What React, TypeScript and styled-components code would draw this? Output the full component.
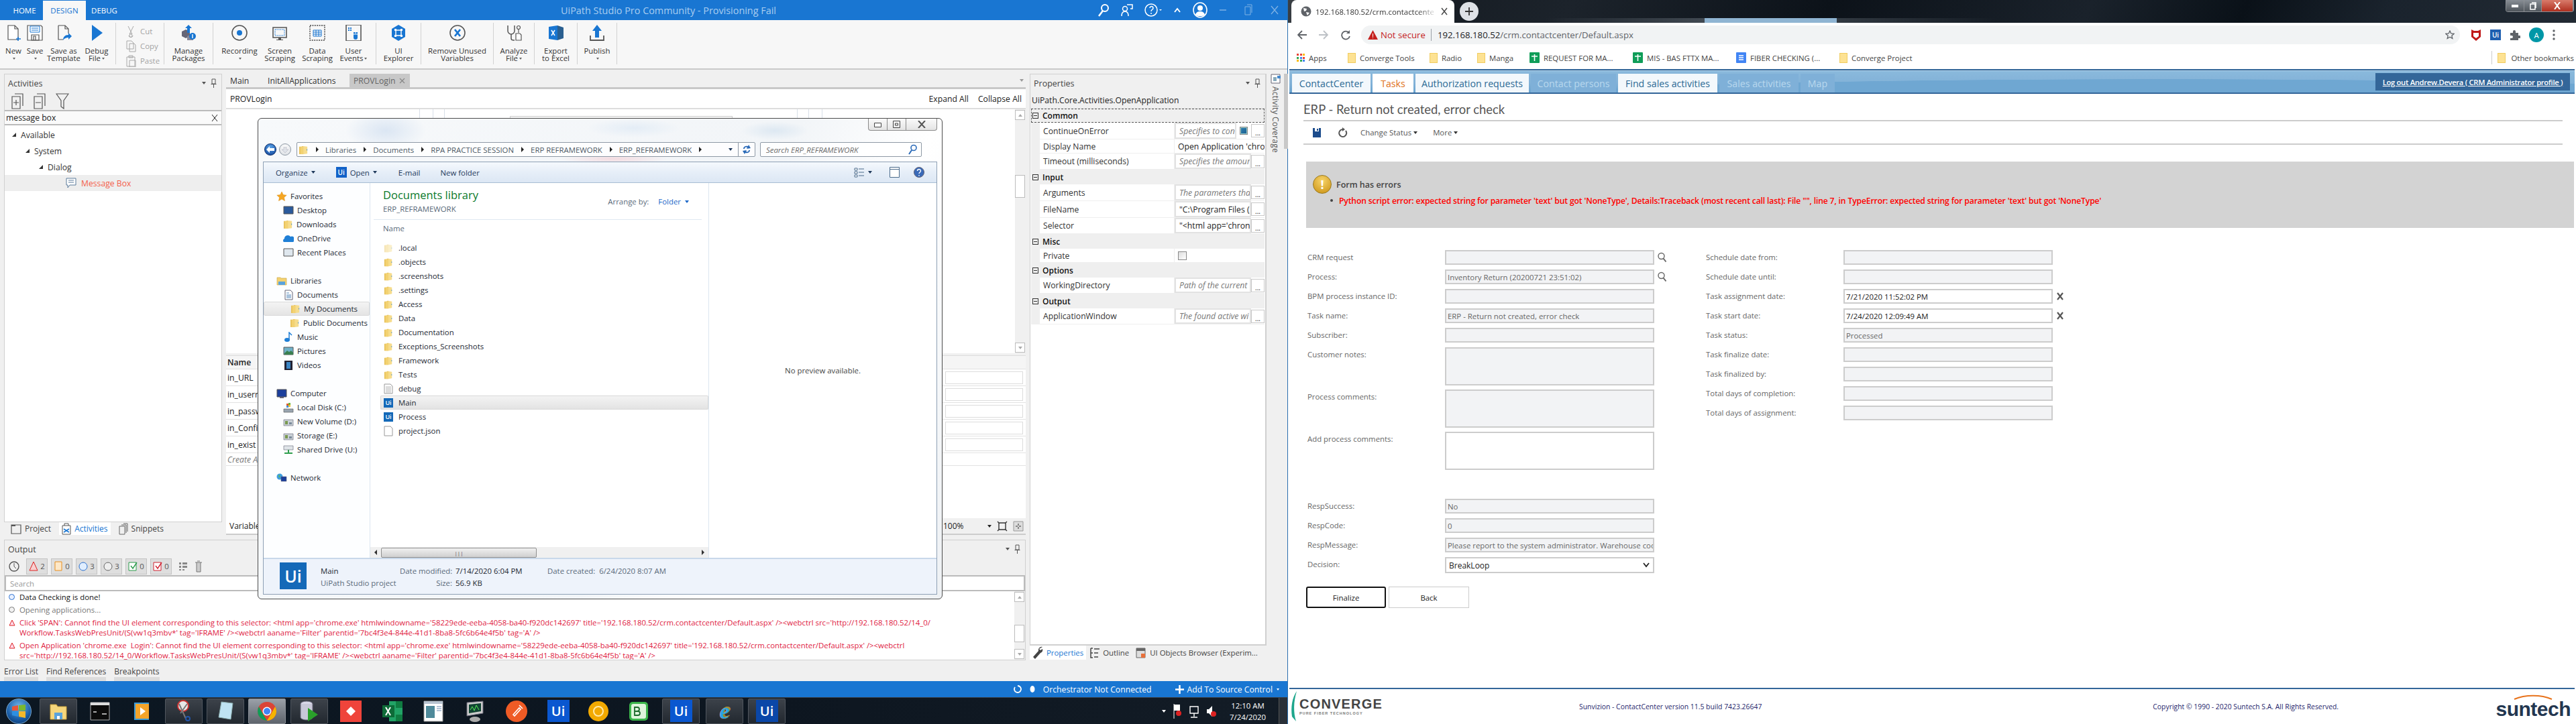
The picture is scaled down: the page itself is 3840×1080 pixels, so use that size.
import React from "react";
import styled, { createGlobalStyle } from "styled-components";

const FONT = `"Open Sans", "Noto Sans", "Liberation Sans", sans-serif`;
const BLUE = "#1976d2";

const GlobalStyle = createGlobalStyle`
  html, body { margin: 0; padding: 0; background: #fff; }
  body { width: 3840px; height: 1080px; overflow: hidden; font-family: ${FONT}; font-size: 11.4px; color: #222; }
  * { box-sizing: border-box; }
`;

const Screen = styled.div`
  display: flex;
  width: 3840px;
  height: 1080px;
  overflow: hidden;
`;

/* ---------- shared bits ---------- */

const Line = styled.div`
  white-space: pre;
`;

const Svg = styled.svg`
  display: block;
  flex: none;
`;

const Folder = ({ s = 15 }: { s?: number }) => (
  <Svg width={s} height={s} viewBox="0 0 16 16">
    <path d="M1 3h4l1-1h2v13H1z" fill="#e8c25c" />
    <path d="M8 2l6 1v11l-6 1z" fill="#f6dc8c" />
    <path d="M3 3h5v12H3z" fill="#f3d272" />
    <path d="M13 7h1v2h-1z" fill="#4a90c0" />
  </Svg>
);

const PaleFolder = styled.span`
  display: block;
  opacity: 0.45;
`;

const UiSquare = styled.span<{ $s: number; $bg?: string }>`
  display: flex;
  flex: none;
  align-items: center;
  justify-content: center;
  width: ${(p) => p.$s}px;
  height: ${(p) => p.$s}px;
  background: ${(p) => p.$bg ?? "#1469b8"};
  color: #fff;
  font-weight: 600;
  font-size: ${(p) => Math.round(p.$s * 0.62)}px;
  line-height: 1;
`;

const Dotted = styled.div`
  flex: 1;
  height: 5px;
  margin: 0 8px;
  background-image: radial-gradient(#a8a8a8 0.6px, transparent 0.7px);
  background-size: 2px 2px;
`;

const Chevron = styled.span<{ $c?: string }>`
  display: inline-block;
  width: 0;
  height: 0;
  border-left: 3px solid transparent;
  border-right: 3px solid transparent;
  border-top: 4px solid ${(p) => p.$c ?? "#555"};
`;

const Pin = () => (
  <Svg width="9" height="14" viewBox="0 0 9 14">
    <path d="M2 1h5v7H2zM0.5 8.5h8M4.500 9v5" fill="none" stroke="#555" />
  </Svg>
);

/* ---------- studio title bar ---------- */

const Studio = styled.div`
  position: relative;
  display: flex;
  flex-direction: column;
  width: 1920px;
  height: 1080px;
  background: #f0f0f0;
  border-right: 1px solid #2a6fb0;
`;

const TitleBar = styled.div`
  display: flex;
  align-items: center;
  height: 30px;
  background: ${BLUE};
  color: #fff;
  flex: none;
`;

const MenuTab = styled.div<{ $on?: boolean }>`
  display: flex;
  align-items: center;
  justify-content: center;
  height: 29px;
  margin-top: 1px;
  width: ${(p) => (p.$on ? 64 : 55)}px;
  background: ${(p) => (p.$on ? "#f7f7f7" : "transparent")};
  color: ${(p) => (p.$on ? BLUE : "#fff")};
  font-size: 11.5px;
`;

const MenuFirst = styled(MenuTab)`
  margin-left: 9px;
  width: 55px;
`;

const AppTitle = styled.div`
  flex: 1;
  text-align: center;
  color: #a9cdf0;
  font-size: 14.4px;
  padding-left: 174px;
`;

const TitleIcons = styled.div`
  display: flex;
  align-items: center;
  gap: 17px;
  padding-right: 12px;
`;

/* ---------- ribbon ---------- */

const Ribbon = styled.div`
  display: flex;
  flex: none;
  height: 74px;
  padding: 4px 0 0 4px;
  background: #f7f7f7;
  border-bottom: 2px solid #c9c9c9;
`;

const RibbonBtn = styled.div<{ $w: number }>`
  display: flex;
  flex-direction: column;
  align-items: center;
  width: ${(p) => p.$w}px;
  flex: none;
  padding-top: 3px;
  text-align: center;
  line-height: 11px;
  font-size: 11.4px;
  white-space: nowrap;
  color: #333;
`;

const RibbonLabel = styled.div`
  margin-top: 9px;
  height: 22px;
`;

const RibbonDrop = styled.span`
  display: inline-block;
  margin-left: 2px;
  vertical-align: middle;
  width: 0;
  height: 0;
  border-left: 2.5px solid transparent;
  border-right: 2.5px solid transparent;
  border-top: 3px solid #666;
`;

const StatusDrop = styled(RibbonDrop)`
  border-top-color: #fff;
`;

const RibbonSep = styled.div<{ $l?: number }>`
  width: 1px;
  flex: none;
  height: 62px;
  margin: 0 0 0 ${(p) => p.$l ?? 0}px;
  background: #d2d2d2;
`;

const ClipGroup = styled.div`
  display: flex;
  flex-direction: column;
  width: 71px;
  flex: none;
  padding: 2px 0 0 14px;
  gap: 1px;
`;

const ClipRow = styled.div`
  display: flex;
  align-items: center;
  height: 21px;
  gap: 6px;
  color: #a3a3a3;
`;

const rs = { fill: "none", stroke: "#555", strokeWidth: 1.2 };

const ribbonIcons: Record<string, React.ReactNode> = {
  new: (
    <>
      <path d="M4 1h10l5 5v16H4z" {...rs} fill="#fff" />
      <path d="M14 1v5h5" {...rs} />
      <path d="M19 18v6M16 21h7" stroke={BLUE} strokeWidth="1.6" />
    </>
  ),
  save: (
    <>
      <path d="M1 1h20l2 2v20H1z" {...rs} fill="#fff" />
      <path d="M5 2h14v9H5z" stroke={BLUE} fill="none" />
      <path d="M7 5h10M7 8h10" stroke={BLUE} />
      <path d="M7 15h11v8H7zM10 17h3v6h-3z" {...rs} />
    </>
  ),
  saveas: (
    <>
      <path d="M4 1h10l5 5v7M4 1v21h7" {...rs} />
      <path d="M14 1v5h5" {...rs} />
      <path d="M11 23c0-5 3-8 8-8v-3l5 5-5 5v-3c-3 0-6 1-8 4z" fill={BLUE} />
    </>
  ),
  play: <path d="M5 0l16 12L5 24z" fill={BLUE} />,
  packages: (
    <>
      <path d="M2 10l6-3 6 3v7l-6 3-6-3z" fill="#667" />
      <path d="M10 17l5-2 4 2v6h-9z" fill="#889" />
      <path d="M12 0l5 5h-3v7h-4V5H7z" fill={BLUE} />
      <circle cx="18" cy="17" r="5" fill={BLUE} />
      <path d="M18 14v6" stroke="#fff" strokeWidth="1.4" />
    </>
  ),
  record: (
    <>
      <circle cx="12" cy="12" r="11" {...rs} strokeWidth="1.6" />
      <circle cx="12" cy="12" r="4" fill={BLUE} />
    </>
  ),
  screen: (
    <>
      <path d="M2 4h20v15H2z" {...rs} strokeWidth="1.6" />
      <path d="M5 7h14v9H5z" fill="none" stroke={BLUE} strokeDasharray="1.5 1" />
      <path d="M10 19h4v3h3v1H7v-1h3z" fill="#555" />
    </>
  ),
  data: (
    <>
      <path d="M1 1h22v22H1z" fill="none" stroke="#444" strokeWidth="1.4" strokeDasharray="2 1.4" />
      <path d="M6 8h12v9H6zM6 11h12M6 14h12M10 8v9M14 8v9" fill="none" stroke={BLUE} />
    </>
  ),
  events: (
    <>
      <path d="M1 0h22v24H1z" {...rs} strokeWidth="1.6" />
      <path d="M4 4h2v2H4zM7 4h2v2H7zM4 7h2v2H4zM7 7h2v2H7z" fill={BLUE} />
      <path d="M12 11h6v8a3 3 0 01-6 0z" fill={BLUE} />
      <path d="M15 6v7M12 14h6" stroke="#fff" />
    </>
  ),
  explorer: (
    <>
      <path d="M12 0l10 6v12l-10 6-10-6V6z" fill={BLUE} />
      <path d="M8 8h8v8H8z" fill="none" stroke="#fff" strokeWidth="1.4" />
      <path d="M6 6h3v3H6zM15 6h3v3h-3zM6 15h3v3H6zM15 15h3v3h-3z" fill="#fff" />
    </>
  ),
  remove: (
    <>
      <circle cx="12" cy="12" r="11" {...rs} strokeWidth="1.6" />
      <path d="M8 7l8 10M16 7L8 17" stroke={BLUE} strokeWidth="2.8" />
    </>
  ),
  analyze: (
    <>
      <path d="M3 1v8a5 5 0 0010 0V1M8 14v6a3 3 0 003 3h2" {...rs} strokeWidth="1.5" />
      <circle cx="19" cy="4" r="2.500" {...rs} />
      <path d="M19 7v5" {...rs} />
      <path d="M15 13h6l2 2v8h-8z" {...rs} fill="#fff" />
    </>
  ),
  excel: (
    <>
      <path d="M14 1l9 3v16l-9 3z" fill="#2a5f90" />
      <path d="M1 3l13-2v22L1 21z" fill={BLUE} />
      <path d="M5 8l5 8M10 8l-5 8" stroke="#fff" strokeWidth="1.6" />
    </>
  ),
  publish: (
    <>
      <path d="M12 0l7 9h-4v10H9V9H5z" fill={BLUE} />
      <path d="M2 16v7h20v-7" {...rs} strokeWidth="1.8" />
    </>
  ),
};

type RibbonItem = { icon: string; w: number; lines: string[]; drop?: boolean };

const ribbonA: RibbonItem[] = [
  { icon: "new", w: 32, lines: ["New"], drop: true },
  { icon: "save", w: 32, lines: ["Save"], drop: true },
  { icon: "saveas", w: 54, lines: ["Save as", "Template"] },
  { icon: "play", w: 44, lines: ["Debug", "File"], drop: true },
];

const ribbonB: RibbonItem[][] = [
  [{ icon: "packages", w: 72, lines: ["Manage", "Packages"] }],
  [
    { icon: "record", w: 78, lines: ["Recording"], drop: true },
    { icon: "screen", w: 42, lines: ["Screen", "Scraping"] },
    { icon: "data", w: 70, lines: ["Data", "Scraping"] },
    { icon: "events", w: 38, lines: ["User", "Events"], drop: true },
  ],
  [{ icon: "explorer", w: 66, lines: ["UI", "Explorer"] }],
  [{ icon: "remove", w: 107, lines: ["Remove Unused", "Variables"] }],
  [{ icon: "analyze", w: 60, lines: ["Analyze", "File"], drop: true }],
  [{ icon: "excel", w: 63, lines: ["Export", "to Excel"] }],
  [{ icon: "publish", w: 58, lines: ["Publish"], drop: true }],
];

const RibbonItemView = ({ item }: { item: RibbonItem }) => (
  <RibbonBtn $w={item.w}>
    <Svg width="24" height="24" viewBox="0 0 24 24">
      {ribbonIcons[item.icon]}
    </Svg>
    <RibbonLabel>
      <Line>{item.lines[0]}</Line>
      {item.lines.length > 1 && <Line>{item.lines[1]}{item.drop && <RibbonDrop />}</Line>}
      {item.lines.length === 1 && item.drop && <RibbonDrop />}
    </RibbonLabel>
  </RibbonBtn>
);

const RibbonBar = () => (
  <Ribbon>
    {ribbonA.map((i) => (
      <RibbonItemView key={i.icon} item={i} />
    ))}
    <RibbonSep $l={6} />
    <ClipGroup>
      {[
        ["Cut", "M4 1l6 12M12 1L6 13M6 13a2.500 2.500 0 11-1 2M10 13a2.500 2.500 0 101 2"],
        ["Copy", "M2 1h7l3 3v9H2zM6 5h7l2 2v10H6z"],
        ["Paste", "M2 3h12v14H2zM5 1h6v3H5zM6 8h9v10H6z"],
      ].map(([t, d]) => (
        <ClipRow key={t}>
          <Svg width="16" height="18" viewBox="0 0 16 18">
            <path d={d} fill="none" stroke="#a8a8a8" />
          </Svg>
          {t}
        </ClipRow>
      ))}
    </ClipGroup>
    <RibbonSep />
    {ribbonB.map((group, n) => (
      <React.Fragment key={n}>
        {group.map((i) => (
          <RibbonItemView key={i.icon} item={i} />
        ))}
        <RibbonSep $l={n === 1 ? 14 : 0} />
      </React.Fragment>
    ))}
  </Ribbon>
);

/* ---------- workspace ---------- */

const Workspace = styled.div`
  display: flex;
  flex: none;
  height: 881px;
  padding: 6px 0 0 6px;
`;

const LeftBlock = styled.div`
  display: flex;
  flex-direction: column;
  width: 1523px;
  flex: none;
`;

const TopRow = styled.div`
  display: flex;
  height: 688px;
  flex: none;
  gap: 6px;
`;

const ActivitiesCol = styled.div`
  display: flex;
  flex-direction: column;
  width: 325px;
  flex: none;
`;

const Panel = styled.div`
  display: flex;
  flex-direction: column;
  flex: 1;
  min-height: 0;
  border: 1px solid #d0d0d0;
  background: #f0f0f0;
`;

const PanelHead = styled.div`
  display: flex;
  align-items: center;
  height: 26px;
  flex: none;
  padding: 0 5px;
  font-size: 12.5px;
  color: #444;
`;

const HeadMenu = styled.div`
  display: flex;
  align-items: center;
  gap: 7px;
  padding-right: 2px;
`;

const ActToolbar = styled.div`
  display: flex;
  align-items: center;
  gap: 15px;
  height: 27px;
  flex: none;
  padding: 0 10px;
`;

const SearchBox = styled.div`
  display: flex;
  align-items: center;
  justify-content: space-between;
  height: 23px;
  flex: none;
  padding: 0 5px 0 2px;
  background: #fafafa;
  border-top: 2px solid #bbb;
  border-bottom: 2px solid #bbb;
  font-size: 12.2px;
`;

const Tree = styled.div`
  flex: 1;
  background: #fff;
  padding-top: 2px;
`;

const TreeRow = styled.div<{ $d: number; $sel?: boolean }>`
  display: flex;
  align-items: center;
  height: 24px;
  padding-left: ${(p) => 11 + p.$d * 20}px;
  gap: 7px;
  font-size: 12.2px;
  background: ${(p) => (p.$sel ? "#eeeeee" : "transparent")};
  color: ${(p) => (p.$sel ? "#f4604c" : "#333")};
`;

const TreeArrow = styled.span`
  width: 0;
  height: 0;
  border-bottom: 6px solid #333;
  border-left: 6px solid transparent;
`;

const BottomTabs = styled.div`
  display: flex;
  align-items: center;
  height: 19px;
  flex: none;
  gap: 8px;
  padding-left: 6px;
  font-size: 12px;
  color: #444;
`;

const DockTab = styled.div<{ $on?: boolean }>`
  display: flex;
  align-items: center;
  gap: 5px;
  height: 19px;
  padding: 0 4px;
  background: ${(p) => (p.$on ? "#fff" : "transparent")};
  color: ${(p) => (p.$on ? BLUE : "#444")};
`;

/* designer */

const DesignerCol = styled.div`
  display: flex;
  flex-direction: column;
  flex: 1;
  min-width: 0;
`;

const DocTabs = styled.div`
  display: flex;
  align-items: stretch;
  height: 20px;
  flex: none;
  font-size: 12.2px;
  color: #333;
`;

const DocTab = styled.div<{ $on?: boolean; $w: number }>`
  display: flex;
  align-items: center;
  width: ${(p) => p.$w}px;
  padding-left: 6px;
  gap: 6px;
  background: ${(p) => (p.$on ? "#c8c8c8" : "transparent")};
  color: ${(p) => (p.$on ? "#666" : "#333")};
`;

const DocTabEnd = styled.div`
  display: flex;
  align-items: center;
  margin-left: auto;
  padding-right: 3px;
`;

const Crumb = styled.div`
  display: flex;
  align-items: center;
  height: 30px;
  flex: none;
  padding: 0 6px;
  margin-top: 3px;
  gap: 14px;
  background: #fff;
  border-bottom: 2px solid #ddd;
  box-shadow: 0 -3px 0 #c8c8c8;
  font-size: 12.2px;
`;

const CrumbName = styled.div`
  flex: 1;
`;

const CanvasRow = styled.div`
  display: flex;
  flex: 1;
  min-height: 0;
  background: #fff;
`;

const Canvas = styled.div`
  position: relative;
  flex: 1;
  overflow: hidden;
`;

const CanvasLine = styled.div<{ $x: number }>`
  position: absolute;
  left: ${(p) => p.$x}px;
  top: 0;
  width: 1px;
  height: 15px;
  background: #d8dfe8;
`;

const GhostCard = styled.div`
  position: absolute;
  left: 423px;
  top: 10px;
  width: 332px;
  height: 40px;
  border: 1px solid #cfcfcf;
  background: #f8f8f8;
`;

const VScroll = styled.div`
  position: relative;
  display: flex;
  flex-direction: column;
  justify-content: space-between;
  width: 16px;
  flex: none;
  background: #f0f0f0;
  padding: 1px 0;
`;

const ScrollBtn = styled.div<{ $down?: boolean }>`
  display: flex;
  align-items: center;
  justify-content: center;
  width: 15px;
  height: 15px;
  background: #fff;
  border: 1px solid #bcbcbc;
  &::after {
    content: "";
    border-left: 3px solid transparent;
    border-right: 3px solid transparent;
    ${(p) => (p.$down ? "border-top: 4px solid #aaa;" : "border-bottom: 4px solid #aaa;")}
  }
`;

const ScrollThumb = styled.div<{ $t: number; $h: number }>`
  position: absolute;
  top: ${(p) => p.$t}px;
  left: 0;
  width: 15px;
  height: ${(p) => p.$h}px;
  background: #fff;
  border: 1px solid #bcbcbc;
`;

const Args = styled.div`
  display: flex;
  flex-direction: column;
  height: 243px;
  flex: none;
  margin-top: 3px;
  background: #fff;
  border-top: 1px solid #ddd;
`;

const ArgRow = styled.div<{ $h: number; $head?: boolean }>`
  display: flex;
  align-items: center;
  justify-content: space-between;
  height: ${(p) => p.$h}px;
  flex: none;
  padding: 0 4px 0 2px;
  background: ${(p) => (p.$head ? "#f5f5f5" : "#fff")};
  border-bottom: 1px solid #e2e2e2;
  font-size: 12.2px;
  font-weight: ${(p) => (p.$head ? 600 : 400)};
`;

const ArgName = styled.span<{ $hint?: boolean }>`
  font-style: ${(p) => (p.$hint ? "italic" : "normal")};
  color: ${(p) => (p.$hint ? "#777" : "#222")};
`;

const ArgValue = styled.div`
  width: 116px;
  height: 19px;
  border: 1px solid #dcdcdc;
  background: #fff;
`;

const ViewBar = styled.div`
  display: flex;
  align-items: center;
  justify-content: space-between;
  height: 25px;
  flex: none;
  background: #f0f0f0;
  border-bottom: 2px solid #ccc;
`;

const VarTab = styled.div`
  width: 48px;
  height: 23px;
  background: #fff;
  padding: 3px 5px;
  font-size: 12px;
`;

const ZoomCtl = styled.div`
  display: flex;
  align-items: center;
  gap: 8px;
  padding-right: 3px;
  font-size: 12px;
`;

const ZoomValue = styled.div`
  width: 58px;
`;

/* output */

const OutputPanel = styled(Panel)`
  flex: none;
  height: 180px;
  margin-top: 7px;
`;

const OutBar = styled.div`
  display: flex;
  align-items: center;
  gap: 5px;
  height: 25px;
  flex: none;
  padding: 0 0 0 6px;
`;

const LevelBtn = styled.div`
  display: flex;
  align-items: center;
  justify-content: center;
  gap: 3px;
  width: 32px;
  height: 24px;
  background: #dedede;
  border: 1px solid #c4c4c4;
  font-size: 11.4px;
  color: #555;
`;

const OutSearch = styled.div`
  display: flex;
  align-items: center;
  height: 24px;
  flex: none;
  padding: 0 6px;
  margin-top: 1px;
  background: #fff;
  border: 2px solid #bbb;
  color: #999;
  font-size: 11.4px;
`;

const OutBody = styled.div`
  display: flex;
  flex: 1;
  min-height: 0;
  background: #fff;
`;

const Log = styled.div`
  flex: 1;
  min-width: 0;
  overflow: hidden;
  padding: 1px 0 0 4px;
`;

const LogRow = styled.div<{ $c: string }>`
  display: flex;
  align-items: flex-start;
  gap: 5px;
  color: ${(p) => p.$c};
  margin-bottom: 4px;
  font-size: 11.4px;
  line-height: 15px;
`;

const LogIcon = styled.div`
  width: 13px;
  height: 15px;
  display: flex;
  align-items: center;
  justify-content: center;
  flex: none;
`;

const ErrTabs = styled.div`
  display: flex;
  flex: none;
  gap: 12px;
  height: 31px;
  padding: 8px 0 0 6px;
  font-size: 12px;
  color: #444;
`;

const ErrTab = styled.div`
  display: flex;
  flex-direction: column;
  justify-content: space-between;
  &::after {
    content: "";
    height: 6px;
    background: #dcdcdc;
  }
`;

const StatusBar = styled.div`
  display: flex;
  align-items: center;
  justify-content: flex-end;
  height: 24px;
  flex: none;
  background: ${BLUE};
  color: #fff;
  font-size: 12.2px;
  padding-right: 12px;
  gap: 6px;
`;

const StatusGroup = styled.div<{ $gap: number; $ml?: number }>`
  display: flex;
  align-items: center;
  gap: ${(p) => p.$gap}px;
  margin-left: ${(p) => p.$ml ?? 0}px;
`;

/* properties */

const PropCol = styled.div`
  display: flex;
  flex-direction: column;
  width: 353px;
  flex: none;
  margin-left: 6px;
  height: 875px;
`;

const PropPanel = styled(Panel)`
  border-width: 1px 2px 2px 1px;
  height: 853px;
  flex: none;
`;

const PropType = styled.div`
  display: flex;
  align-items: center;
  height: 25px;
  flex: none;
  padding: 0 2px;
  border-bottom: 1px solid #e0e0e0;
  font-size: 12.2px;
`;

const Grid = styled.div`
  flex: 1;
  background: #fff;
  padding: 0 1px;
`;

const CatRow = styled.div<{ $focus?: boolean; $h?: number }>`
  display: flex;
  align-items: center;
  gap: 6px;
  height: ${(p) => p.$h ?? 22}px;
  padding-left: 2px;
  background: #efefef;
  font-weight: 600;
  font-size: 12px;
  color: #111;
  outline: ${(p) => (p.$focus ? "1px dashed #555" : "none")};
  outline-offset: -1px;
`;

const Expander = styled.span`
  display: flex;
  align-items: center;
  justify-content: center;
  width: 9px;
  height: 9px;
  border: 1px solid #333;
  &::after {
    content: "";
    width: 5px;
    height: 1px;
    background: #333;
  }
`;

const PropRow = styled.div<{ $h: number }>`
  display: flex;
  height: ${(p) => p.$h}px;
  border-left: 13px solid #efefef;
  border-bottom: 1px solid #efefef;
  background: #fff;
`;

const PropName = styled.div`
  display: flex;
  align-items: center;
  width: 201px;
  flex: none;
  padding-left: 5px;
  border-right: 1px solid #efefef;
  font-size: 12.2px;
  color: #333;
`;

const PropVal = styled.div<{ $plain?: boolean; $hint?: boolean }>`
  flex: 1;
  min-width: 0;
  display: flex;
  align-items: center;
  padding-left: 5px;
  overflow: hidden;
  white-space: nowrap;
  font-size: 12.2px;
  font-style: ${(p) => (p.$hint ? "italic" : "normal")};
  color: ${(p) => (p.$hint ? "#777" : "#222")};
  ${(p) => (p.$plain ? "" : "border: 2px solid #e2e2e2;")}
`;

const EllipsisBtn = styled.div`
  display: flex;
  align-items: flex-end;
  justify-content: center;
  width: 20px;
  flex: none;
  height: 20px;
  margin-top: 2px;
  border: 1px solid #c8c8c8;
  background: #fff;
  font-size: 10px;
  line-height: 12px;
`;

const DefaultBtn = styled.div`
  width: 12px;
  height: 12px;
  flex: none;
  margin: 6px 5px 0;
  background: linear-gradient(135deg, #2f7fb0, #1a5f90);
  border: 1px solid #888;
  box-shadow: inset 0 0 0 1px #9cc;
`;

const CheckBox = styled.div`
  width: 13px;
  height: 13px;
  background: linear-gradient(135deg, #ddd, #fff);
  border: 1px solid #888;
`;

const PropTabs = styled.div`
  display: flex;
  align-items: center;
  height: 21px;
  flex: none;
  gap: 2px;
  font-size: 11.4px;
  white-space: nowrap;
  color: #444;
`;

const PropTab = styled.div<{ $on?: boolean }>`
  display: flex;
  align-items: center;
  gap: 5px;
  height: 21px;
  padding: 0 4px;
  background: ${(p) => (p.$on ? "#fff" : "transparent")};
  color: ${(p) => (p.$on ? BLUE : "#444")};
`;

const CoverageStrip = styled.div`
  display: flex;
  flex-direction: column;
  align-items: center;
  width: 25px;
  flex: none;
  margin-left: 1px;
  gap: 4px;
`;

const CoverageText = styled.div`
  writing-mode: vertical-rl;
  font-size: 11.8px;
  color: #555;
  letter-spacing: 0.3px;
`;

const ScrollEdge = styled.div`
  width: 6px;
  height: 112px;
  flex: none;
  background: #c8c8c8;
`;

/* ---------- explorer window over the designer ---------- */

const Explorer = styled.div`
  position: absolute;
  left: 384px;
  top: 176px;
  width: 1021px;
  height: 718px;
  display: flex;
  flex-direction: column;
  padding: 0 7px 6px;
  border: 1px solid #4c4c4c;
  border-radius: 6px;
  background:
    radial-gradient(60px 30px at 190px 18px, #dbe6f3, transparent),
    radial-gradient(70px 14px at 560px 14px, #e4edf6, transparent),
    radial-gradient(50px 14px at 770px 18px, #dde8f2, transparent),
    radial-gradient(80px 8px at 530px 60px, #f4dbe0, transparent),
    linear-gradient(115deg, #f7f9fb 0%, #f2f5f8 60%, #ffffff 75%, #eef1f4 100%);
`;

const ExpTop = styled.div`
  display: flex;
  justify-content: flex-end;
  height: 18px;
  flex: none;
`;

const WinBtns = styled.div`
  display: flex;
  height: 18px;
  border: 1px solid #8a8a8a;
  border-top: 0;
  border-radius: 0 0 4px 4px;
  background: linear-gradient(#fafafa, #e4e4e4);
`;

const WinBtn = styled.div<{ $w: number }>`
  display: flex;
  align-items: center;
  justify-content: center;
  width: ${(p) => p.$w}px;
  border-right: 1px solid #8a8a8a;
  &:last-child {
    border-right: 0;
  }
`;

const ExpNav = styled.div`
  display: flex;
  align-items: center;
  height: 22px;
  margin-top: 17px;
  flex: none;
`;

const BackBtn = styled.div`
  width: 18px;
  height: 18px;
  border-radius: 50%;
  flex: none;
  display: flex;
  align-items: center;
  justify-content: center;
  margin-left: 2px;
  background: radial-gradient(circle at 50% 30%, #5aa3e8, #0c3f96);
  border: 1px solid #0a2a66;
`;

const FwdBtn = styled(BackBtn)`
  margin-left: 4px;
  background: radial-gradient(circle at 50% 30%, #fff, #d7dbe0);
  border: 1px solid #8f9aa5;
`;

const AddrBar = styled.div`
  display: flex;
  align-items: center;
  width: 684px;
  height: 22px;
  margin-left: 8px;
  padding-left: 2px;
  background: rgba(255, 255, 255, 0.8);
  border: 1px solid #8e99a5;
  border-radius: 2px;
  color: #4e5a66;
  flex: none;
`;

const CrumbArrow = styled.span`
  flex: none;
  width: 0;
  height: 0;
  margin-left: 11px;
  border-left: 4px solid #222;
  border-top: 4px solid transparent;
  border-bottom: 4px solid transparent;
`;

const AddrCrumb = styled.span`
  margin-left: 10px;
`;

const AddrEnd = styled.div`
  display: flex;
  align-items: center;
  margin-left: auto;
  height: 100%;
`;

const AddrDrop = styled.div`
  width: 24px;
  display: flex;
  justify-content: center;
  border-right: 1px solid #8e99a5;
  align-items: center;
  height: 100%;
`;

const AddrRefresh = styled.div`
  width: 24px;
  display: flex;
  justify-content: center;
`;

const ExpSearch = styled.div`
  display: flex;
  align-items: center;
  justify-content: space-between;
  width: 241px;
  height: 22px;
  margin-left: 7px;
  padding: 0 6px 0 8px;
  background: rgba(255, 255, 255, 0.85);
  border: 1px solid #8e99a5;
  border-radius: 2px;
  font-style: italic;
  color: #6d6d6d;
  flex: none;
`;

const ExpInner = styled.div`
  display: flex;
  flex-direction: column;
  flex: 1;
  min-height: 0;
  margin-top: 7px;
  border: 1px solid #8ea0b5;
  background: #fff;
`;

const ExpToolbar = styled.div`
  display: flex;
  align-items: center;
  height: 31px;
  flex: none;
  padding: 0 18px;
  background: linear-gradient(#f5f9fd, #e6eef8 50%, #dce7f4);
  border-bottom: 1px solid #a9bdd4;
  color: #1e395b;
`;

const ExpTool = styled.div<{ $l?: number; $push?: boolean }>`
  display: flex;
  align-items: center;
  gap: 5px;
  margin-left: ${(p) => (p.$push ? "auto" : `${p.$l ?? 0}px`)};
`;

const ExpBody = styled.div`
  display: flex;
  flex: 1;
  min-height: 0;
`;

const NavPane = styled.div`
  width: 159px;
  flex: none;
  padding-top: 9px;
  border-right: 1px solid #dbe6f0;
  background: #fdfeff;
  overflow: hidden;
`;

const NavRow = styled.div<{ $d: number; $gap?: boolean; $sel?: boolean }>`
  display: flex;
  align-items: center;
  gap: 5px;
  height: 21px;
  white-space: nowrap;
  margin-top: ${(p) => (p.$gap ? 21 : 0)}px;
  padding-left: ${(p) => [19, 29, 39][p.$d]}px;
  background: ${(p) => (p.$sel ? "linear-gradient(#f4f4f4, #e4e4e4)" : "transparent")};
  border: ${(p) => (p.$sel ? "1px solid #d9d9d9" : "0")};
  border-radius: 2px;
  color: #1c2833;
`;

const FilesPane = styled.div`
  display: flex;
  flex-direction: column;
  width: 505px;
  flex: none;
  border-right: 1px solid #dbe6f0;
`;

const FilesHead = styled.div`
  display: flex;
  align-items: flex-start;
  justify-content: space-between;
  height: 55px;
  flex: none;
  margin: 0 10px 0 5px;
  padding: 7px 19px 0 14px;
  border-bottom: 1px solid #dfe8f2;
`;

const LibName = styled.div`
  font-size: 16.5px;
  line-height: 21px;
  color: #0a7a2a;
`;

const LibSub = styled.div`
  font-size: 11.4px;
  color: #5a6a7a;
  margin-top: 3px;
`;

const ArrangeRow = styled.div`
  display: flex;
  align-items: center;
  margin-top: 13px;
  gap: 14px;
  color: #5a6a7a;
`;

const ArrangeValue = styled.span`
  display: flex;
  align-items: center;
  gap: 6px;
  color: #1a66c8;
`;

const NameHead = styled.div`
  height: 31px;
  flex: none;
  padding: 5px 0 0 19px;
  color: #5a6a7a;
`;

const FileRows = styled.div`
  flex: 1;
  min-height: 0;
  padding: 0 0 0 15px;
`;

const FileRow = styled.div<{ $sel?: boolean }>`
  display: flex;
  align-items: center;
  gap: 8px;
  height: 21px;
  padding-left: 5px;
  border-radius: 2px;
  color: #1c2833;
  background: ${(p) => (p.$sel ? "linear-gradient(#f4f4f4, #e2e2e2)" : "transparent")};
  ${(p) => (p.$sel ? "box-shadow: 0 0 0 1px #d8d8d8 inset;" : "")}
`;

const HScroll = styled.div`
  display: flex;
  align-items: center;
  justify-content: space-between;
  height: 16px;
  flex: none;
  padding: 0 6px;
  background: #f0f0f0;
`;

const HThumb = styled.div`
  display: flex;
  align-items: center;
  justify-content: center;
  width: 232px;
  height: 15px;
  margin: 0 auto 0 6px;
  background: linear-gradient(#f0f0f0, #cfcfcf);
  border: 1px solid #8f8f8f;
  border-radius: 2px;
  font-size: 8px;
  color: #555;
`;

const HArrow = styled.span<{ $right?: boolean }>`
  width: 0;
  height: 0;
  border-top: 4px solid transparent;
  border-bottom: 4px solid transparent;
  ${(p) => (p.$right ? "border-left: 4px solid #333;" : "border-right: 4px solid #333;")}
`;

const Preview = styled.div`
  display: flex;
  align-items: center;
  justify-content: center;
  flex: 1;
  color: #444;
`;

const Details = styled.div`
  display: flex;
  align-items: flex-start;
  height: 54px;
  flex: none;
  padding: 5px 0 0 24px;
  background: #eef3fb;
  border-top: 2px solid #c8d8ea;
`;

const DetailGrid = styled.div`
  display: grid;
  grid-template-columns: 118px 83px 137px auto;
  grid-auto-rows: 18px;
  align-items: center;
  margin: 3px 0 0 21px;
  white-space: nowrap;
`;

const DetailKey = styled.span`
  text-align: right;
  padding-right: 5px;
  color: #5a6a7a;
`;

const DetailVal = styled.span<{ $sub?: boolean }>`
  color: ${(p) => (p.$sub ? "#5a6a7a" : "#1c2833")};
`;

/* ---------- taskbar ---------- */

const Taskbar = styled.div`
  display: flex;
  align-items: stretch;
  height: 40px;
  flex: none;
  background: linear-gradient(90deg, #0c1722, #0d1620 60%, #131c26);
  border-top: 1px solid #3a3f46;
`;

const TaskSlot = styled.div<{ $w: number }>`
  display: flex;
  align-items: center;
  justify-content: center;
  width: ${(p) => p.$w}px;
  flex: none;
`;

const Glass = styled.div<{ $on?: boolean }>`
  display: flex;
  align-items: center;
  justify-content: center;
  width: 56px;
  height: 38px;
  border: 1px solid ${(p) => (p.$on ? "#8a8f96" : "#50565e")};
  border-radius: 2px;
  background: ${(p) =>
    p.$on
      ? "linear-gradient(#9aa0a8, #5e646c)"
      : "linear-gradient(#3c424a, #22282f)"};
`;

const Orb = styled.div`
  display: flex;
  align-items: center;
  justify-content: center;
  width: 38px;
  height: 38px;
  border-radius: 50%;
  background: radial-gradient(circle at 50% 30%, #6fb4e8, #1a5ea8 60%, #0a2f60);
  border: 1px solid #79a7cc;
`;

const Tray = styled.div`
  display: flex;
  align-items: center;
  margin-left: auto;
  gap: 10px;
  color: #fff;
`;

const Clock = styled.div`
  width: 72px;
  text-align: center;
  line-height: 17px;
  font-size: 11.4px;
`;

const ShowDesktop = styled.div`
  width: 13px;
  height: 100%;
  background: #2a3038;
  border-left: 1px solid #555;
`;

const IeMark = styled.span`
  font: italic 700 34px "Liberation Serif", serif;
  color: #29a3e6;
  text-shadow: 0 0 1px #f2c230, 2px -2px 0 rgba(242, 194, 48, 0.6);
  line-height: 1;
`;

/* ---------- chrome ---------- */

const Browser = styled.div`
  display: flex;
  flex-direction: column;
  width: 1920px;
  height: 1080px;
  flex: none;
  background: #fff;
`;

const TabStrip = styled.div`
  display: flex;
  align-items: flex-end;
  height: 34px;
  flex: none;
  padding-left: 5px;
  background:
    linear-gradient(#8fb4d2, #8fb4d2) 621px 27px / 197px 7px no-repeat,
    linear-gradient(90deg, transparent 20%, rgba(120, 130, 140, 0.55) 35%, transparent 55%) 0 27px / 100% 7px no-repeat,
    linear-gradient(115deg, #3a3f45 0%, #161c23 10%, #1c232b 22%, #0c1219 42%, #1a222b 62%, #0a1118 74%, #1a232d 85%, #222a33 100%);
`;

const BrowserTab = styled.div`
  display: flex;
  align-items: center;
  gap: 6px;
  width: 243px;
  height: 34px;
  padding: 0 10px 0 14px;
  background: #fff;
  border-radius: 8px 8px 0 0;
  flex: none;
`;

const TabTitle = styled.div`
  flex: 1;
  overflow: hidden;
  white-space: nowrap;
  color: #333;
  -webkit-mask-image: linear-gradient(90deg, #000 85%, transparent);
  mask-image: linear-gradient(90deg, #000 85%, transparent);
`;

const NewTab = styled.div`
  display: flex;
  align-items: center;
  justify-content: center;
  width: 28px;
  height: 28px;
  margin: 0 0 3px 8px;
  border-radius: 50%;
  background: #dee1e6;
  flex: none;
`;

const WinControls = styled.div`
  display: flex;
  align-self: flex-start;
  margin-left: auto;
  margin-right: 3px;
  height: 18px;
  border: 1px solid #8b8f94;
  border-top: 0;
  border-radius: 0 0 4px 4px;
  overflow: hidden;
`;

const WinCtl = styled.div<{ $w: number; $close?: boolean }>`
  display: flex;
  align-items: center;
  justify-content: center;
  width: ${(p) => p.$w}px;
  background: ${(p) =>
    p.$close ? "linear-gradient(#d87a6a, #b03020)" : "linear-gradient(#888e95, #50565c)"};
  border-right: 1px solid #8b8f94;
`;

const ChromeBar = styled.div`
  display: flex;
  align-items: center;
  height: 36px;
  flex: none;
  background: #fff;
`;

const NavBtns = styled.div`
  display: flex;
  align-items: center;
  gap: 18px;
  padding-left: 14px;
  width: 109px;
  flex: none;
`;

const Omnibox = styled.div`
  display: flex;
  align-items: center;
  width: 1638px;
  height: 28px;
  flex: none;
  padding: 0 8px 0 10px;
  border-radius: 14px;
  background: #f1f3f4;
  font-size: 13.2px;
  color: #5f6368;
`;

const NotSecure = styled.span`
  color: #c5221f;
  margin-left: 4px;
`;

const OmniSep = styled.span`
  width: 1px;
  height: 18px;
  margin: 0 9px 0 8px;
  background: #9aa0a6;
`;

const Host = styled.span`
  color: #202124;
`;

const OmniStar = styled.div`
  margin-left: auto;
`;

const ExtIcons = styled.div`
  display: flex;
  align-items: center;
  gap: 13px;
  padding-left: 16px;
`;

const Avatar = styled.div`
  display: flex;
  align-items: center;
  justify-content: center;
  width: 22px;
  height: 22px;
  border-radius: 50%;
  background: #0097a7;
  color: #fff;
`;

const Bookmarks = styled.div`
  display: flex;
  align-items: center;
  height: 32px;
  flex: none;
  padding-left: 13px;
  background: #fff;
  color: #444;
`;

const Bookmark = styled.div<{ $w: number }>`
  display: flex;
  align-items: center;
  gap: 6px;
  width: ${(p) => p.$w}px;
  flex: none;
  white-space: nowrap;
`;

const OtherMarks = styled.div`
  display: flex;
  align-items: center;
  gap: 8px;
  margin-left: auto;
  padding: 0 3px 0 8px;
  height: 20px;
  border-left: 1px solid #ccc;
`;

const BmFolder = styled.span`
  display: block;
  width: 12px;
  height: 15px;
  flex: none;
  background: #fde293;
  border: 1px solid #f0cc60;
`;

const AppsGrid = styled.span`
  display: grid;
  grid-template-columns: repeat(3, 3px);
  grid-auto-rows: 3px;
  gap: 1.5px;
  flex: none;
`;

const AppsDot = styled.span<{ $c: string }>`
  background: ${(p) => p.$c};
`;

const DocMark = styled.span<{ $c: string }>`
  display: flex;
  align-items: center;
  justify-content: center;
  width: 15px;
  height: 16px;
  flex: none;
  background: ${(p) => p.$c};
  border-radius: 1px;
`;

/* crm page */

const Page = styled.div`
  display: flex;
  flex-direction: column;
  flex: 1;
  min-height: 0;
  margin: 1px 2px 0 2px;
  border-top: 2px solid #336699;
  background: #fff;
`;

const CrmTabs = styled.div`
  display: flex;
  align-items: flex-end;
  height: 35px;
  flex: none;
  padding: 0 7px 0 4px;
  background:
    radial-gradient(900px 24px at 1300px 36px, #6fa7d2 98%, transparent),
    linear-gradient(#8ab9dc, #82b2d8 55%, #6ba5d0);
  border-bottom: 2px solid #336699;
  border-top: 1px solid #b5d3e8;
`;

const CrmTab = styled.div<{ $w: number; $state: "on" | "idle" | "off" }>`
  display: flex;
  align-items: center;
  justify-content: center;
  width: ${(p) => p.$w}px;
  flex: none;
  height: 28px;
  margin-right: 3px;
  font-size: 14.2px;
  background: ${(p) => (p.$state === "off" ? "#7fb0d8" : p.$state === "on" ? "#fff" : "#f3f8fc")};
  color: ${(p) => (p.$state === "off" ? "#b9d8ee" : p.$state === "on" ? "#e0701a" : "#2c6a94")};
`;

const LogOut = styled.div`
  display: flex;
  align-items: center;
  align-self: center;
  justify-content: center;
  margin-left: auto;
  width: 290px;
  height: 26px;
  background: #336699;
  color: #fff;
  font-weight: 600;
  font-size: 11.2px;
  letter-spacing: -0.3px;
  text-decoration: underline;
`;

const CrmBody = styled.div`
  display: flex;
  flex-direction: column;
  flex: 1;
  min-height: 0;
  padding: 0 1px 0 25px;
`;

const CrmTitle = styled.div`
  height: 41px;
  flex: none;
  padding: 8px 0 0 0;
  margin: 0 17px 0 -4px;
  border-bottom: 2px solid #ccc;
  font-size: 18.4px;
  line-height: 30px;
  color: #555;
  font-family: Lato, ${FONT};
`;

const CrmTools = styled.div`
  display: flex;
  align-items: center;
  height: 35px;
  flex: none;
  margin: 0 17px 0 -4px;
  padding-left: 14px;
  border-bottom: 2px solid #ccc;
  color: #555;
`;

const CrmTool = styled.div<{ $l?: number }>`
  display: flex;
  align-items: center;
  gap: 3px;
  margin-left: ${(p) => p.$l ?? 0}px;
`;

const ErrorBox = styled.div`
  height: 99px;
  flex: none;
  margin-top: 25px;
  padding: 20px 0 0 10px;
  background: #d3d3d3;
`;

const ErrHead = styled.div`
  display: flex;
  align-items: center;
  gap: 7px;
  font-size: 12.5px;
  font-weight: 600;
  color: #444;
`;

const Warn = styled.div`
  display: flex;
  align-items: center;
  justify-content: center;
  width: 28px;
  height: 28px;
  flex: none;
  border-radius: 50%;
  background: radial-gradient(circle at 50% 30%, #f7d46a, #c98f10);
  border: 1px solid #9a7a20;
  color: #fff;
  font-weight: 700;
  font-size: 18px;
`;

const ErrItem = styled.div`
  display: flex;
  align-items: center;
  gap: 9px;
  height: 20px;
  padding-left: 26px;
  white-space: nowrap;
  font-weight: 600;
  font-size: 12.2px;
  letter-spacing: -0.16px;
  color: #f00;
`;

const Bullet = styled.span`
  width: 4px;
  height: 4px;
  border-radius: 50%;
  background: #444;
  flex: none;
`;

const FormGrid = styled.div`
  display: flex;
  gap: 77px;
  padding: 33px 0 0 2px;
  flex: none;
`;

const FormCol = styled.div`
  display: flex;
  flex-direction: column;
  width: 517px;
  flex: none;
  gap: 7px;
`;

const RespCol = styled(FormCol)`
  margin: 43px 0 0 2px;
`;

const FieldRow = styled.div<{ $h?: number; $mt?: number }>`
  display: flex;
  height: ${(p) => p.$h ?? 22}px;
  margin-top: ${(p) => p.$mt ?? 0}px;
`;

const Label = styled.div`
  width: 205px;
  flex: none;
  line-height: 22px;
  color: #666;
`;

const FieldBox = styled.div<{ $open?: boolean }>`
  display: flex;
  align-items: center;
  width: 312px;
  flex: none;
  padding-left: 2px;
  border: 2px solid #ccc;
  overflow: hidden;
  white-space: nowrap;
  background: ${(p) => (p.$open ? "#fff" : "#f2f3f5")};
  color: ${(p) => (p.$open ? "#222" : "#666")};
`;

const FieldAdorn = styled.div`
  display: flex;
  align-items: center;
  margin-left: 5px;
  flex: none;
`;

const DecisionBox = styled(FieldBox)`
  justify-content: space-between;
  padding: 0 5px 0 4px;
  font-size: 12px;
`;

const Buttons = styled.div`
  display: flex;
  gap: 4px;
  margin-top: 20px;
  flex: none;
`;

const Btn = styled.div<{ $focus?: boolean }>`
  display: flex;
  align-items: center;
  justify-content: center;
  width: ${(p) => (p.$focus ? 119 : 120)}px;
  height: 32px;
  border: ${(p) => (p.$focus ? "2px solid #111" : "1px solid #ccc")};
  border-radius: ${(p) => (p.$focus ? 3 : 0)}px;
  background: #fff;
  color: #222;
`;

const Footer = styled.div`
  display: flex;
  align-items: center;
  margin: auto -1px 0 -25px;
  height: 54px;
  flex: none;
  border-top: 2px solid #336699;
  padding-left: 2px;
  background: #fff;
`;

const ConvergeLogo = styled.div`
  display: flex;
  align-items: center;
  width: 128px;
  flex: none;
  gap: 3px;
`;

const ConvergeName = styled.div`
  font-family: "Liberation Sans", sans-serif;
  font-size: 20px;
  line-height: 20px;
  font-weight: 700;
  letter-spacing: 1.2px;
  color: #444;
`;

const ConvergeTag = styled.div`
  font-family: "Liberation Sans", sans-serif;
  font-size: 5.5px;
  line-height: 8px;
  font-weight: 700;
  letter-spacing: 1px;
  color: #777;
`;

const Version = styled.div`
  margin-left: 302px;
  font-size: 10.4px;
  color: #24246b;
  white-space: nowrap;
`;

const Copyright = styled.div`
  margin-left: 583px;
  font-size: 10.4px;
  color: #24246b;
  white-space: nowrap;
`;

const SuntechWrap = styled.div`
  display: flex;
  flex-direction: column;
  align-items: center;
  margin-left: auto;
  padding-right: 6px;
`;

const Suntech = styled.div`
  font-family: "Liberation Sans", sans-serif;
  font-weight: 700;
  font-size: 30px;
  line-height: 28px;
  letter-spacing: -0.5px;
  color: #23364f;
`;

/* ---------- data ---------- */

const nd = (c: string, extra?: React.ReactNode) => (
  <Svg width="16" height="16" viewBox="0 0 16 16">
    <path d="M1 2h14v11H1z" fill={c} stroke="#555" />
    {extra}
  </Svg>
);

const navRows: { t: string; d: number; gap?: boolean; sel?: boolean; icon: React.ReactNode }[] = [
  { t: "Favorites", d: 0, icon: <Svg width="16" height="16" viewBox="0 0 16 16"><path d="M8 1l2.200 4.600 5 .6-3.700 3.400 1 5L8 12.100 3.500 14.600l1-5L.8 6.200l5-.6z" fill="#f5a623" stroke="#d98a10" strokeWidth=".5" /></Svg> },
  { t: "Desktop", d: 1, icon: nd("#2a5a9c") },
  { t: "Downloads", d: 1, icon: <Folder /> },
  { t: "OneDrive", d: 1, icon: <Svg width="16" height="16" viewBox="0 0 16 16"><path d="M1 13a3 3 0 011-5 5 5 0 019-3 4 4 0 014 8z" fill="#1f7fd6" /></Svg> },
  { t: "Recent Places", d: 1, icon: nd("#dfe7ee") },
  { t: "Libraries", d: 0, gap: true, icon: <Svg width="16" height="16" viewBox="0 0 16 16"><path d="M1 3h5l1 1h8v10H1z" fill="#f3d272" stroke="#c9a23c" strokeWidth=".6" /><path d="M3 9h10v5H3z" fill="#5aa3dc" /></Svg> },
  { t: "Documents", d: 1, icon: <Svg width="16" height="16" viewBox="0 0 16 16"><path d="M3 1h8l3 3v11H3z" fill="#fff" stroke="#667" /><path d="M5 5h4M5 8h7M5 10h7M5 12h7" stroke="#5588bb" /></Svg> },
  { t: "My Documents", d: 2, sel: true, icon: <Folder /> },
  { t: "Public Documents", d: 2, icon: <Folder /> },
  { t: "Music", d: 1, icon: <Svg width="16" height="16" viewBox="0 0 16 16"><ellipse cx="6" cy="12" rx="4" ry="3" fill="#1f7fd6" /><path d="M9 12V1l4 4" fill="none" stroke="#1f7fd6" strokeWidth="1.500" /></Svg> },
  { t: "Pictures", d: 1, icon: nd("#6fb1c8", <path d="M2 11l4-4 3 2 3-2 3 3v3H2z" fill="#3a8050" />) },
  { t: "Videos", d: 1, icon: <Svg width="16" height="16" viewBox="0 0 16 16"><path d="M2 1h12v14H2z" fill="#223" /><path d="M5 3h6v10H5z" fill="#3b85c4" /></Svg> },
  { t: "Computer", d: 0, gap: true, icon: nd("#1c3f9c", <path d="M5 13h6v2H5z" fill="#667" />) },
  { t: "Local Disk (C:)", d: 1, icon: <Svg width="16" height="16" viewBox="0 0 16 16"><path d="M1 10h14v5H1z" fill="#99a5b0" stroke="#555" strokeWidth=".6" /><path d="M5 2h3v3H5z" fill="#e05a2a" /><path d="M8 1h3v3H8z" fill="#6cb33f" /><path d="M5 5h3v3H5z" fill="#3f8fe0" /><path d="M8 4h3v3H8z" fill="#f3c233" /></Svg> },
  { t: "New Volume (D:)", d: 1, icon: <Svg width="16" height="16" viewBox="0 0 16 16"><path d="M1 5h14v9H1z" fill="#c9d0d6" stroke="#667" strokeWidth=".6" /><path d="M3 7h4v5H3z" fill="#7a9a50" /><path d="M9 9h4v3H9z" fill="#7a8a9a" /></Svg> },
  { t: "Storage (E:)", d: 1, icon: <Svg width="16" height="16" viewBox="0 0 16 16"><path d="M1 5h14v9H1z" fill="#c9d0d6" stroke="#667" strokeWidth=".6" /><path d="M3 7h4v5H3z" fill="#7a9a50" /><path d="M9 9h4v3H9z" fill="#7a8a9a" /></Svg> },
  { t: "Shared Drive (U:)", d: 1, icon: <Svg width="16" height="16" viewBox="0 0 16 16"><path d="M1 2h14v6H1z" fill="#dfe4e8" stroke="#667" strokeWidth=".6" /><path d="M7 8h2v4H7zM2 12h12v2H2z" fill="#2e9e4e" /></Svg> },
  { t: "Network", d: 0, gap: true, icon: <Svg width="16" height="16" viewBox="0 0 16 16"><circle cx="5" cy="6" r="4.500" fill="#3f9fe0" /><path d="M3 3l3 2-2 3z" fill="#5cb85c" /><path d="M7 6h8v7H7z" fill="#1c3f9c" stroke="#667" strokeWidth=".5" /></Svg> },
];

const fileRows = [
  ".local", ".objects", ".screenshots", ".settings", "Access", "Data", "Documentation",
  "Exceptions_Screenshots", "Framework", "Tests", "debug", "Main", "Process", "project.json",
];

const catGrid: { cat: string; focus?: boolean; rows: { n: string; v?: string; h: number; hint?: boolean; plain?: boolean; check?: boolean; extra?: boolean }[] }[] = [
  {
    cat: "Common",
    focus: true,
    rows: [
      { n: "ContinueOnError", v: "Specifies to con", h: 25, hint: true, extra: true },
      { n: "Display Name", v: "Open Application 'chron", h: 21, plain: true },
      { n: "Timeout (milliseconds)", v: "Specifies the amour", h: 24, hint: true },
    ],
  },
  {
    cat: "Input",
    rows: [
      { n: "Arguments", v: "The parameters tha", h: 25, hint: true },
      { n: "FileName", v: "\"C:\\Program Files (x", h: 25 },
      { n: "Selector", v: "\"<html app='chron", h: 24 },
    ],
  },
  { cat: "Misc", rows: [{ n: "Private", h: 21, check: true, plain: true }] },
  { cat: "Options", rows: [{ n: "WorkingDirectory", v: "Path of the current", h: 24, hint: true }] },
  { cat: "Output", rows: [{ n: "ApplicationWindow", v: "The found active wi", h: 24, hint: true }] },
];

const logLines = [
  [
    "Click 'SPAN': Cannot find the UI element corresponding to this selector: <html app='chrome.exe' htmlwindowname='58229ede-eeba-4058-ba40-f920dc142697' title='192.168.180.52/crm.contactcenter/Default.aspx' /><webctrl src='http://192.168.180.52/14_0/",
    "Workflow.TasksWebPresUnit/(S(vw1q3mbv*' tag='IFRAME' /><webctrl aaname='Filter' parentid='7bc4f3e4-844e-41d1-8ba8-5fc6b64e4f5b' tag='A' />",
  ],
  [
    "Open Application 'chrome.exe  Login': Cannot find the UI element corresponding to this selector: <html app='chrome.exe' htmlwindowname='58229ede-eeba-4058-ba40-f920dc142697' title='192.168.180.52/crm.contactcenter/Default.aspx' /><webctrl",
    "src='http://192.168.180.52/14_0/Workflow.TasksWebPresUnit/(S(vw1q3mbv*' tag='IFRAME' /><webctrl aaname='Filter' parentid='7bc4f3e4-844e-41d1-8ba8-5fc6b64e4f5b' tag='A' />",
  ],
];

const levels: [string, string, React.ReactNode][] = [
  ["e", "2", <path key="a" d="M7 1l6 13H1z" fill="#f8d0d0" stroke="#d22" />],
  ["w", "0", <path key="a" d="M2 1h10v13H2z" fill="#fde8c8" stroke="#e89020" />],
  ["i", "3", <circle key="a" cx="7" cy="8" r="6" fill="#e0eeff" stroke="#2a70d0" />],
  ["t", "3", <circle key="a" cx="7" cy="8" r="6" fill="#eee" stroke="#666" />],
  ["o", "0", <><path d="M1 2h11v12H1z" fill="#fff" stroke="#2a9a4a" /><path d="M4 7l3 4 6-9" fill="none" stroke="#2a9a4a" strokeWidth="1.400" /></>],
  ["f", "0", <><path d="M1 2h11v12H1z" fill="#fff" stroke="#d02030" /><path d="M4 7l3 4 6-9" fill="none" stroke="#d02030" strokeWidth="1.400" /></>],
];

const taskWidths = [62, 62, 63, 62, 61, 64, 62, 62, 61, 62, 62, 62, 62, 58, 61, 66, 64, 62];

const taskIcons: { on?: boolean; glass?: boolean; node: React.ReactNode }[] = [
  { glass: true, node: <Svg width="30" height="30" viewBox="0 0 30 30"><path d="M3 5h9l2 3h13v19H3z" fill="#f5d67c" stroke="#c9a23c" /><path d="M9 17h12v10H9z" fill="#5aa3dc" /><path d="M13 22h4v5h-4z" fill="#fff" /></Svg> },
  { node: <Svg width="30" height="30" viewBox="0 0 30 30"><path d="M1 2h28v26H1z" fill="#0c0c0c" stroke="#aaa" /><path d="M1 2h28v4H1z" fill="#ddd" /><path d="M5 16h5M18 19h7" stroke="#ddd" strokeWidth="1.500" /></Svg> },
  { node: <Svg width="28" height="30" viewBox="0 0 28 30"><path d="M2 2h22v26H2z" fill="#3a9ad9" /><path d="M4 4h20v22H4z" fill="#f4a42a" /><path d="M11 9l8 6-8 6z" fill="#fff" /></Svg> },
  { glass: true, node: <Svg width="30" height="34" viewBox="0 0 30 34"><circle cx="14" cy="9" r="8" fill="#e7e7e7" stroke="#c33" strokeWidth="2" /><path d="M8 6l10 22M20 6L10 20" stroke="#777" strokeWidth="2" /><circle cx="21" cy="28" r="3" fill="none" stroke="#25a" strokeWidth="2" /></Svg> },
  { glass: true, node: <Svg width="26" height="32" viewBox="0 0 26 32"><path d="M7 2l17 2-3 24-18-3z" fill="#bfe3f3" stroke="#8aa" /></Svg> },
  { glass: true, on: true, node: <Svg width="30" height="30" viewBox="0 0 30 30"><circle cx="15" cy="15" r="14" fill="#db4437" /><path d="M27.100 8A14 14 0 0115 29l6-10z" fill="#f4b400" /><path d="M15 29A14 14 0 012.900 8l6 11z" fill="#0f9d58" /><circle cx="15" cy="15" r="6.500" fill="#fff" /><circle cx="15" cy="15" r="5" fill="#4285f4" /></Svg> },
  { glass: true, node: <Svg width="30" height="34" viewBox="0 0 30 34"><ellipse cx="11" cy="6" rx="9" ry="4" fill="#d8d8e8" stroke="#667" /><path d="M2 6v20c0 2 4 4 9 4s9-2 9-4V6" fill="#c8c8d8" stroke="#667" /><path d="M13 12l15 10-15 10z" fill="#2aa02a" /></Svg> },
  { node: <UiSquare $s={32} $bg="#ef443b"><Svg width="22" height="16" viewBox="0 0 22 16"><path d="M11 1l7 7-7 7-7-7z" fill="#fff" /></Svg></UiSquare> },
  { node: <Svg width="32" height="32" viewBox="0 0 32 32"><path d="M11 1h20v30H11z" fill="#21a366" /><path d="M21 1h10v10H21zM21 21h10v10H21z" fill="#107c41" /><path d="M1 7h18v18H1z" fill="#0e6b38" /><path d="M6 10l7 12M13 10l-7 12" stroke="#fff" strokeWidth="2" /></Svg> },
  { node: <Svg width="30" height="32" viewBox="0 0 30 32"><path d="M1 1h28v30H1z" fill="#fff" stroke="#999" /><path d="M1 1h28v4H1z" fill="#b8c4d0" /><path d="M4 8h13v18H4z" fill="#4f8a9a" /><path d="M20 9h7M20 12h7M20 15h7" stroke="#6a8ab0" /></Svg> },
  { node: <Svg width="32" height="34" viewBox="0 0 32 34"><path d="M4 4l24-2v18L4 24z" fill="#ccc" stroke="#667" /><path d="M7 7l18-2v12L7 20z" fill="#143" /><path d="M9 15l3-5 3 6 3-8 4 7" fill="none" stroke="#5e5" /><ellipse cx="16" cy="29" rx="8" ry="4" fill="#aaa" /></Svg> },
  { node: <Svg width="32" height="32" viewBox="0 0 32 32"><circle cx="16" cy="16" r="16" fill="#ef5b25" /><path d="M11 21l9-10 2 2-9 10zM20 7l5 5" stroke="#fff" strokeWidth="1.600" fill="none" /></Svg> },
  { node: <UiSquare $s={33} $bg="#0a57d0">Ui</UiSquare> },
  { node: <Svg width="30" height="30" viewBox="0 0 30 30"><circle cx="15" cy="15" r="15" fill="#f2a900" /><circle cx="15" cy="15" r="7" fill="none" stroke="#ffe9a8" strokeWidth="2" /></Svg> },
  { node: <Svg width="30" height="30" viewBox="0 0 30 30"><rect x="1" y="1" width="28" height="28" rx="5" fill="#3bb54a" /><rect x="4" y="4" width="22" height="22" rx="3" fill="#dff5dc" /><path d="M9 9h4a3 3 0 010 6H9zM9 15h5a3 3 0 010 6H9z" fill="none" stroke="#1b6a2b" strokeWidth="1.800" /></Svg> },
  { glass: true, node: <UiSquare $s={33} $bg="#0a57d0">Ui</UiSquare> },
  { glass: true, node: <IeMark>e</IeMark> },
  { glass: true, node: <UiSquare $s={33} $bg="#0a47a8">Ui</UiSquare> },
];

const leftFields: { l: string; v?: string; h?: number; open?: boolean; find?: boolean }[] = [
  { l: "CRM request", find: true },
  { l: "Process:", v: "Inventory Return (20200721 23:51:02)", find: true },
  { l: "BPM process instance ID:" },
  { l: "Task name:", v: "ERP - Return not created, error check" },
  { l: "Subscriber:" },
  { l: "Customer notes:", h: 57 },
  { l: "Process comments:", h: 57 },
  { l: "Add process comments:", h: 57, open: true },
];

const rightFields: { l: string; v?: string; open?: boolean; clear?: boolean }[] = [
  { l: "Schedule date from:" },
  { l: "Schedule date until:" },
  { l: "Task assignment date:", v: "7/21/2020 11:52:02 PM", open: true, clear: true },
  { l: "Task start date:", v: "7/24/2020 12:09:49 AM", open: true, clear: true },
  { l: "Task status:", v: "Processed" },
  { l: "Task finalize date:" },
  { l: "Task finalized by:" },
  { l: "Total days of completion:" },
  { l: "Total days of assignment:" },
];

const respFields = [
  { l: "RespSuccess:", v: "No" },
  { l: "RespCode:", v: "0" },
  { l: "RespMessage:", v: "Please report to the system administrator. Warehouse cod" },
];

const Magnifier = () => (
  <Svg width="14" height="16" viewBox="0 0 14 16">
    <circle cx="5.500" cy="6" r="4.500" fill="none" stroke="#666" strokeWidth="1.400" />
    <path d="M8.500 9.500l4 5" stroke="#666" strokeWidth="2" />
  </Svg>
);

const ClearX = () => (
  <Svg width="12" height="12" viewBox="0 0 12 12">
    <path d="M2 1l8 10M10 1L2 11" stroke="#555" strokeWidth="2.200" />
  </Svg>
);

const bookmarkRows: { t: string; w: number; kind: "folder" | "green" | "blue" }[] = [
  { t: "Converge Tools", w: 122, kind: "folder" },
  { t: "Radio", w: 71, kind: "folder" },
  { t: "Manga", w: 78, kind: "folder" },
  { t: "REQUEST FOR MA...", w: 154, kind: "green" },
  { t: "MIS - BAS FTTX MA...", w: 154, kind: "green" },
  { t: "FIBER CHECKING (...", w: 154, kind: "blue" },
  { t: "Converge Project", w: 130, kind: "folder" },
];

const addrCrumbs = ["Libraries", "Documents", "RPA PRACTICE SESSION", "ERP REFRAMEWORK", "ERP_REFRAMEWORK"];

const App = () => (
  <Screen>
    <GlobalStyle />

    <Studio>
      <TitleBar>
        <MenuFirst>HOME</MenuFirst>
        <MenuTab $on>DESIGN</MenuTab>
        <MenuTab>DEBUG</MenuTab>
        <AppTitle>UiPath Studio Pro Community - Provisioning Fail</AppTitle>
        <TitleIcons>
          <Svg width="18" height="20" viewBox="0 0 18 20"><circle cx="11" cy="7" r="5" fill="none" stroke="#fff" strokeWidth="2" /><path d="M8 11l-6 8" stroke="#fff" strokeWidth="2.500" /></Svg>
          <Svg width="18" height="20" viewBox="0 0 18 20"><circle cx="6" cy="8" r="3.500" fill="none" stroke="#fff" strokeWidth="1.500" /><path d="M1 19c0-5 2-7 5-7s5 2 5 7M9 2h8v6h-3" fill="none" stroke="#fff" strokeWidth="1.500" /></Svg>
          <Svg width="26" height="20" viewBox="0 0 26 20"><circle cx="10" cy="10" r="9" fill="none" stroke="#fff" strokeWidth="1.500" /><path d="M8 7a2.500 2.500 0 114 2c-1 .8-2 1-2 3M10 14v2" fill="none" stroke="#fff" strokeWidth="1.500" /><path d="M22 9l2 2 2-2z" fill="#fff" /></Svg>
          <Svg width="12" height="8" viewBox="0 0 12 8"><path d="M2 7l4-5 4 5" fill="none" stroke="#fff" strokeWidth="2" /></Svg>
          <Svg width="22" height="24" viewBox="0 0 22 24"><ellipse cx="11" cy="12" rx="10" ry="11" fill="none" stroke="#fff" strokeWidth="1.600" /><circle cx="11" cy="9" r="4" fill="#fff" /><path d="M4 19c1-4 4-5 7-5s6 1 7 5c-2 3-12 3-14 0z" fill="#fff" /></Svg>
          <Svg width="12" height="4" viewBox="0 0 12 4"><path d="M1 2h10" stroke="#7fb2e4" strokeWidth="1.500" /></Svg>
          <Svg width="30" height="20" viewBox="0 0 30 20"><path d="M10 5h8v12h-8zM13 2h7v12" fill="none" stroke="#7fb2e4" /></Svg>
          <Svg width="14" height="14" viewBox="0 0 14 14"><path d="M2 1l10 12M12 1L2 13" stroke="#7fb2e4" strokeWidth="1.300" /></Svg>
        </TitleIcons>
      </TitleBar>

      <RibbonBar />

      <Workspace>
        <LeftBlock>
          <TopRow>
            <ActivitiesCol>
              <Panel>
                <PanelHead>
                  Activities
                  <Dotted />
                  <HeadMenu>
                    <Chevron />
                    <Pin />
                  </HeadMenu>
                </PanelHead>
                <ActToolbar>
                  <Svg width="18" height="24" viewBox="0 0 18 24"><path d="M5 1h12v18M1 5h12v18H1zM7 10v8M3 14h8" fill="none" stroke="#555" strokeWidth="1.200" /></Svg>
                  <Svg width="18" height="24" viewBox="0 0 18 24"><path d="M5 1h12v18M1 5h12v18H1zM3 14h8" fill="none" stroke="#555" strokeWidth="1.200" /></Svg>
                  <Svg width="20" height="24" viewBox="0 0 20 24"><path d="M1 1h18L12 11v12l-4-3v-9z" fill="none" stroke="#555" strokeWidth="1.200" /></Svg>
                </ActToolbar>
                <SearchBox>
                  message box
                  <Svg width="10" height="12" viewBox="0 0 10 12"><path d="M1 1l8 10M9 1L1 11" stroke="#222" /></Svg>
                </SearchBox>
                <Tree>
                  <TreeRow $d={0}><TreeArrow />Available</TreeRow>
                  <TreeRow $d={1}><TreeArrow />System</TreeRow>
                  <TreeRow $d={2}><TreeArrow />Dialog</TreeRow>
                  <TreeRow $d={4} $sel>
                    <Svg width="16" height="16" viewBox="0 0 16 16"><path d="M1 1h14v10H6l-3 4v-4H1z" fill="#fff" stroke="#5a7a9a" /><path d="M4 4h8M4 7h8" stroke="#5a7a9a" /></Svg>
                    Message Box
                  </TreeRow>
                </Tree>
              </Panel>
              <BottomTabs>
                <DockTab>
                  <Svg width="16" height="16" viewBox="0 0 16 16"><path d="M1 2h14v13H1z" fill="none" stroke="#555" strokeWidth="1.200" /><path d="M1 2h6v2H1z" fill="#555" /></Svg>
                  Project
                </DockTab>
                <DockTab $on>
                  <Svg width="14" height="18" viewBox="0 0 14 18"><path d="M1 4h12v13H1zM4 4V1h6v3" fill="none" stroke="#555" /><path d="M3 9l8 5M11 9l-8 5" stroke={BLUE} strokeWidth="1.500" /></Svg>
                  Activities
                </DockTab>
                <DockTab>
                  <Svg width="14" height="18" viewBox="0 0 14 18"><path d="M1 5h8v12H1zM4 3h7v12M7 1h6v12" fill="none" stroke="#666" /></Svg>
                  Snippets
                </DockTab>
              </BottomTabs>
            </ActivitiesCol>

            <DesignerCol>
              <DocTabs>
                <DocTab $w={56}>Main</DocTab>
                <DocTab $w={128}>InitAllApplications</DocTab>
                <DocTab $w={90} $on>
                  PROVLogin
                  <Svg width="9" height="9" viewBox="0 0 9 9"><path d="M1 1l7 7M8 1L1 8" stroke="#888" strokeWidth="1.300" /></Svg>
                </DocTab>
                <DocTabEnd><Chevron $c="#999" /></DocTabEnd>
              </DocTabs>
              <Crumb>
                <CrumbName>PROVLogin</CrumbName>
                <span>Expand All</span>
                <span>Collapse All</span>
              </Crumb>
              <CanvasRow>
                <Canvas>
                  <CanvasLine $x={288} />
                  <CanvasLine $x={308} />
                  <CanvasLine $x={325} />
                  <CanvasLine $x={851} />
                  <CanvasLine $x={868} />
                  <CanvasLine $x={888} />
                  <GhostCard />
                </Canvas>
                <VScroll>
                  <ScrollBtn />
                  <ScrollThumb $t={98} $h={34} />
                  <ScrollBtn $down />
                </VScroll>
              </CanvasRow>
              <Args>
                <ArgRow $h={20} $head>Name</ArgRow>
                {["in_URL", "in_username", "in_password", "in_Config", "in_exist"].map((a) => (
                  <ArgRow key={a} $h={25}>
                    <ArgName>{a}</ArgName>
                    <ArgValue />
                  </ArgRow>
                ))}
                <ArgRow $h={19}><ArgName $hint>Create Argument</ArgName></ArgRow>
              </Args>
              <ViewBar>
                <VarTab>Variables</VarTab>
                <ZoomCtl>
                  <ZoomValue>100%</ZoomValue>
                  <Chevron $c="#222" />
                  <Svg width="16" height="16" viewBox="0 0 16 16"><path d="M3 3h10v10H3zM1 1l3 3M15 1l-3 3M1 15l3-3M15 15l-3-3" fill="none" stroke="#333" strokeWidth="1.400" /></Svg>
                  <Svg width="16" height="16" viewBox="0 0 16 16"><path d="M1 1h14v14H1z" fill="#ddd" stroke="#999" /><path d="M8 4v3M8 9v3M4 8h3M9 8h3" stroke="#333" /></Svg>
                </ZoomCtl>
              </ViewBar>
            </DesignerCol>
          </TopRow>

          <OutputPanel>
            <PanelHead>
              Output
              <Dotted />
              <HeadMenu>
                <Chevron />
                <Pin />
              </HeadMenu>
            </PanelHead>
            <OutBar>
              <Svg width="16" height="18" viewBox="0 0 16 18"><circle cx="8" cy="9" r="7" fill="none" stroke="#555" strokeWidth="1.400" /><path d="M8 4v5l3 3" fill="none" stroke="#555" /></Svg>
              <span />
              {levels.map(([k, n, icon]) => (
                <LevelBtn key={k}>
                  <Svg width="14" height="16" viewBox="0 0 14 16">{icon}</Svg>
                  {n}
                </LevelBtn>
              ))}
              <span />
              <Svg width="14" height="14" viewBox="0 0 14 14"><path d="M1 1h3v3H1zM6 1h7v3H6zM1 6h3v3H1zM6 6h7v3H6zM1 11h3v2H1zM6 11h3v2H6z" fill="#888" /></Svg>
              <span />
              <Svg width="12" height="18" viewBox="0 0 12 18"><path d="M1 3h10M3 3v14h6V3M4 1h4" fill="#ccc" stroke="#777" /></Svg>
            </OutBar>
            <OutSearch>Search</OutSearch>
            <OutBody>
              <Log>
                <LogRow $c="#111">
                  <LogIcon><Svg width="9" height="9" viewBox="0 0 9 9"><circle cx="4.500" cy="4.500" r="4" fill="#e8f0ff" stroke="#2a70d0" /></Svg></LogIcon>
                  Data Checking is done!
                </LogRow>
                <LogRow $c="#777">
                  <LogIcon><Svg width="9" height="9" viewBox="0 0 9 9"><circle cx="4.500" cy="4.500" r="4" fill="#f2f2f2" stroke="#777" /></Svg></LogIcon>
                  Opening applications...
                </LogRow>
                {logLines.map((r, i) => (
                  <LogRow key={i} $c="#e0213f">
                    <LogIcon><Svg width="10" height="10" viewBox="0 0 10 10"><path d="M5 1l4 8H1z" fill="#fde" stroke="#d22" /></Svg></LogIcon>
                    <div>
                      {r.map((l) => (
                        <Line key={l}>{l}</Line>
                      ))}
                    </div>
                  </LogRow>
                ))}
              </Log>
              <VScroll>
                <ScrollBtn />
                <ScrollThumb $t={50} $h={26} />
                <ScrollBtn $down />
              </VScroll>
            </OutBody>
          </OutputPanel>
        </LeftBlock>

        <PropCol>
          <PropPanel>
            <PanelHead>
              Properties
              <Dotted />
              <HeadMenu>
                <Chevron />
                <Pin />
              </HeadMenu>
            </PanelHead>
            <PropType>UiPath.Core.Activities.OpenApplication</PropType>
            <Grid>
              {catGrid.map((g) => (
                <React.Fragment key={g.cat}>
                  <CatRow $focus={g.focus} $h={g.focus ? 21 : 22}>
                    <Expander />
                    {g.cat}
                  </CatRow>
                  {g.rows.map((r) => (
                    <PropRow key={r.n} $h={r.h}>
                      <PropName>{r.n}</PropName>
                      <PropVal $plain={r.plain} $hint={r.hint}>
                        {r.check ? <CheckBox /> : r.v}
                      </PropVal>
                      {r.extra && <DefaultBtn />}
                      {!r.plain && <EllipsisBtn>...</EllipsisBtn>}
                    </PropRow>
                  ))}
                </React.Fragment>
              ))}
            </Grid>
          </PropPanel>
          <PropTabs>
            <PropTab $on>
              <Svg width="16" height="20" viewBox="0 0 16 20"><path d="M15 1a5 5 0 00-6 6L1 16l3 3 8-9a5 5 0 003-6l-3 2-2-2z" fill="#444" /></Svg>
              Properties
            </PropTab>
            <PropTab>
              <Svg width="14" height="16" viewBox="0 0 14 16"><path d="M1 1h3M1 1v14h3M6 2h8M6 8h6M6 14h6M1 8h3" fill="none" stroke="#444" strokeWidth="1.500" /></Svg>
              Outline
            </PropTab>
            <PropTab>
              <Svg width="16" height="16" viewBox="0 0 16 16"><path d="M1 1h13v14H1z" fill="#ddd" stroke="#666" /><path d="M1 1h13v4H1z" fill="#666" /><path d="M8 9h6v6H8z" fill="#e8703a" /></Svg>
              UI Objects Browser (Experim...
            </PropTab>
          </PropTabs>
        </PropCol>

        <CoverageStrip>
          <Svg width="16" height="15" viewBox="0 0 16 15"><path d="M1 1h13v13H1z" fill="#fff" stroke="#667" /><path d="M4 5h5v6H4z" fill="#8ab" /><path d="M10 3h5v4h-5z" fill="#48c" /></Svg>
          <CoverageText>Activity Coverage</CoverageText>
        </CoverageStrip>
        <ScrollEdge />
      </Workspace>

      <ErrTabs>
        <ErrTab>Error List</ErrTab>
        <ErrTab>Find References</ErrTab>
        <ErrTab>Breakpoints</ErrTab>
      </ErrTabs>

      <StatusBar>
        <StatusGroup $gap={12}>
          <Svg width="12" height="14" viewBox="0 0 12 14"><path d="M6 2a5 5 0 11-4 2" fill="none" stroke="#fff" strokeWidth="1.800" /></Svg>
          <Svg width="8" height="12" viewBox="0 0 8 12"><ellipse cx="4" cy="6" rx="3.500" ry="5" fill="#fff" /></Svg>
          Orchestrator Not Connected
        </StatusGroup>
        <StatusGroup $gap={4} $ml={30}>
          <Svg width="13" height="13" viewBox="0 0 13 13"><path d="M6.500 0v13M0 6.500h13" stroke="#fff" strokeWidth="2.500" /></Svg>
          Add To Source Control
          <StatusDrop />
        </StatusGroup>
      </StatusBar>

      <Taskbar>
        <TaskSlot $w={56}>
          <Orb>
            <Svg width="22" height="20" viewBox="0 0 22 20">
              <path d="M1 3l9-2v8H1z" fill="#e8563a" />
              <path d="M11 1l10-1v9H11z" fill="#7bb92f" />
              <path d="M1 10h9v8l-9-2z" fill="#2f8fe0" />
              <path d="M11 10h10v10l-10-2z" fill="#f4b82a" />
            </Svg>
          </Orb>
        </TaskSlot>
        {taskIcons.map((t, i) => (
          <TaskSlot key={i} $w={taskWidths[i]}>
            {t.glass ? <Glass $on={t.on}>{t.node}</Glass> : t.node}
          </TaskSlot>
        ))}
        <Tray>
          <Chevron $c="#fff" />
          <Svg width="14" height="24" viewBox="0 0 14 24"><path d="M2 1v22" stroke="#fff" /><path d="M2 2h9v9H2z" fill="#fff" /><circle cx="9" cy="15" r="4" fill="#d22" /></Svg>
          <Svg width="16" height="22" viewBox="0 0 16 22"><path d="M2 4h12v10H2zM8 14v5M3 20h10" fill="none" stroke="#fff" strokeWidth="1.400" /></Svg>
          <Svg width="16" height="22" viewBox="0 0 16 22"><path d="M1 8h3l5-5v16l-5-5H1z" fill="#fff" /><circle cx="11" cy="15" r="4" fill="#d22" /></Svg>
          <Clock>
            <Line>12:10 AM</Line>
            <Line>7/24/2020</Line>
          </Clock>
          <ShowDesktop />
        </Tray>
      </Taskbar>

      <Explorer>
        <ExpTop>
          <WinBtns>
            <WinBtn $w={28}><Svg width="11" height="8" viewBox="0 0 11 8"><path d="M.5 1.500h10v6H.5z" fill="#fff" stroke="#444" /></Svg></WinBtn>
            <WinBtn $w={28}><Svg width="11" height="11" viewBox="0 0 11 11"><path d="M.5.5h10v10H.5zM3.500 4h4v3h-4z" fill="none" stroke="#444" /></Svg></WinBtn>
            <WinBtn $w={45}><Svg width="12" height="11" viewBox="0 0 12 11"><path d="M1 0l10 11M11 0L1 11" stroke="#555" strokeWidth="2" /></Svg></WinBtn>
          </WinBtns>
        </ExpTop>
        <ExpNav>
          <BackBtn><Svg width="12" height="10" viewBox="0 0 12 10"><path d="M5 0L0 5l5 5V7h7V3H5z" fill="#fff" /></Svg></BackBtn>
          <FwdBtn><Svg width="10" height="9" viewBox="0 0 10 9"><path d="M5 9l5-5H7V0H3v4H0z" fill="#dfe3e8" stroke="#aab" strokeWidth=".5" /></Svg></FwdBtn>
          <AddrBar>
            <Folder s={15} />
            {addrCrumbs.map((c) => (
              <React.Fragment key={c}>
                <CrumbArrow />
                <AddrCrumb>{c}</AddrCrumb>
              </React.Fragment>
            ))}
            <CrumbArrow />
            <AddrEnd>
              <AddrDrop><Chevron $c="#1e395b" /></AddrDrop>
              <AddrRefresh>
                <Svg width="14" height="16" viewBox="0 0 14 16"><path d="M2 7c0-3 3-5 7-4l1-2 3 5-6 1 1-2C5 4 4 5 4 7zM12 9c0 3-3 5-7 4l-1 2-3-5 6-1-1 2c3 1 4 0 4-2z" fill="#2a6ab8" /></Svg>
              </AddrRefresh>
            </AddrEnd>
          </AddrBar>
          <ExpSearch>
            Search ERP_REFRAMEWORK
            <Svg width="14" height="16" viewBox="0 0 14 16"><circle cx="9" cy="5.500" r="4" fill="none" stroke="#2a6ab8" strokeWidth="1.600" /><path d="M6 9l-4 6" stroke="#2a6ab8" strokeWidth="2" /></Svg>
          </ExpSearch>
        </ExpNav>
        <ExpInner>
          <ExpToolbar>
            <ExpTool>Organize <Chevron $c="#1e395b" /></ExpTool>
            <ExpTool $l={31}><UiSquare $s={16} $bg="#1262c8">Ui</UiSquare>Open <Chevron $c="#1e395b" /></ExpTool>
            <ExpTool $l={32}>E-mail</ExpTool>
            <ExpTool $l={30}>New folder</ExpTool>
            <ExpTool $push>
              <Svg width="16" height="16" viewBox="0 0 16 16"><path d="M1 2h4v3H1zM1 7h4v3H1zM1 12h4v3H1zM7 3h8M7 8h8M7 13h8" fill="#fff" stroke="#4a6a8a" /></Svg>
              <Chevron $c="#1e395b" />
            </ExpTool>
            <ExpTool $l={26}><Svg width="15" height="16" viewBox="0 0 15 16"><path d="M.5.5h14v15H.5zM.5 3.500h14" fill="#fff" stroke="#4a6a8a" /></Svg></ExpTool>
            <ExpTool $l={21}><Svg width="16" height="18" viewBox="0 0 16 18"><circle cx="8" cy="9" r="7.500" fill="#3a6ab8" stroke="#667" /><path d="M5.500 7a2.500 2.500 0 115 0c0 2-2.500 2-2.500 4M8 13v1.500" fill="none" stroke="#fff" strokeWidth="1.400" /></Svg></ExpTool>
          </ExpToolbar>
          <ExpBody>
            <NavPane>
              {navRows.map((r) => (
                <NavRow key={r.t} $d={r.d} $gap={r.gap} $sel={r.sel}>
                  {r.icon}
                  {r.t}
                </NavRow>
              ))}
            </NavPane>
            <FilesPane>
              <FilesHead>
                <div>
                  <LibName>Documents library</LibName>
                  <LibSub>ERP_REFRAMEWORK</LibSub>
                </div>
                <ArrangeRow>
                  Arrange by:
                  <ArrangeValue>Folder <Chevron $c="#1a66c8" /></ArrangeValue>
                </ArrangeRow>
              </FilesHead>
              <NameHead>Name</NameHead>
              <FileRows>
                {fileRows.map((f) => (
                  <FileRow key={f} $sel={f === "Main"}>
                    {f === ".local" ? (
                      <PaleFolder><Folder s={14} /></PaleFolder>
                    ) : f === "debug" ? (
                      <Svg width="14" height="16" viewBox="0 0 14 16"><path d="M1 1h9l3 3v11H1z" fill="#fff" stroke="#999" /><path d="M3 5h8M3 7h8M3 9h8M3 11h8M3 13h8" stroke="#bbb" /></Svg>
                    ) : f === "project.json" ? (
                      <Svg width="14" height="16" viewBox="0 0 14 16"><path d="M1 1h9l3 3v11H1z" fill="#fff" stroke="#999" /></Svg>
                    ) : f === "Main" || f === "Process" ? (
                      <UiSquare $s={14} $bg="#1469b8">Ui</UiSquare>
                    ) : (
                      <Folder s={14} />
                    )}
                    {f}
                  </FileRow>
                ))}
              </FileRows>
              <HScroll>
                <HArrow />
                <HThumb>|||</HThumb>
                <HArrow $right />
              </HScroll>
            </FilesPane>
            <Preview>No preview available.</Preview>
          </ExpBody>
          <Details>
            <UiSquare $s={40} $bg="#1469b8">Ui</UiSquare>
            <DetailGrid>
              <DetailVal>Main</DetailVal>
              <DetailKey>Date modified:</DetailKey>
              <DetailVal>7/14/2020 6:04 PM</DetailVal>
              <DetailKey>Date created: &nbsp;6/24/2020 8:07 AM</DetailKey>
              <DetailVal $sub>UiPath Studio project</DetailVal>
              <DetailKey>Size:</DetailKey>
              <DetailVal>56.9 KB</DetailVal>
            </DetailGrid>
          </Details>
        </ExpInner>
      </Explorer>
    </Studio>

    <Browser>
      <TabStrip>
        <BrowserTab>
          <Svg width="16" height="16" viewBox="0 0 16 16"><circle cx="8" cy="8" r="7.500" fill="#5f6368" /><path d="M4 3l5 1-1 3-3 1zM8 9l5 1-3 4-1-2z" fill="#fff" /></Svg>
          <TabTitle>192.168.180.52/crm.contactcente</TabTitle>
          <Svg width="10" height="12" viewBox="0 0 10 12"><path d="M1 1l8 10M9 1L1 11" stroke="#444" strokeWidth="1.400" /></Svg>
        </BrowserTab>
        <NewTab><Svg width="12" height="14" viewBox="0 0 12 14"><path d="M6 1v12M0 7h12" stroke="#333" strokeWidth="1.800" /></Svg></NewTab>
        <WinControls>
          <WinCtl $w={27}><Svg width="10" height="4" viewBox="0 0 10 4"><path d="M0 0h10v4H0z" fill="#fff" /></Svg></WinCtl>
          <WinCtl $w={26}><Svg width="10" height="12" viewBox="0 0 10 12"><path d="M1 3h7v8H1zM3 1h6v8" fill="none" stroke="#fff" strokeWidth="1.500" /></Svg></WinCtl>
          <WinCtl $w={47} $close><Svg width="10" height="11" viewBox="0 0 10 11"><path d="M1 0l8 11M9 0L1 11" stroke="#fff" strokeWidth="2" /></Svg></WinCtl>
        </WinControls>
      </TabStrip>

      <ChromeBar>
        <NavBtns>
          <Svg width="14" height="14" viewBox="0 0 14 14"><path d="M14 7H2M7 1L1 7l6 6" fill="none" stroke="#5f6368" strokeWidth="1.800" /></Svg>
          <Svg width="14" height="14" viewBox="0 0 14 14"><path d="M0 7h12M7 1l6 6-6 6" fill="none" stroke="#bdc1c6" strokeWidth="1.800" /></Svg>
          <Svg width="16" height="16" viewBox="0 0 16 16"><path d="M13 5a6 6 0 101 5" fill="none" stroke="#5f6368" strokeWidth="1.800" /><path d="M14 1v5H9z" fill="#5f6368" /></Svg>
        </NavBtns>
        <Omnibox>
          <Svg width="15" height="14" viewBox="0 0 15 14"><path d="M7.500 0L15 14H0z" fill="#c5221f" /><path d="M7 5h1v5H7zM7 11h1v1H7z" fill="#fff" /></Svg>
          <NotSecure>Not secure</NotSecure>
          <OmniSep />
          <Host>192.168.180.52</Host>/crm.contactcenter/Default.aspx
          <OmniStar>
            <Svg width="14" height="14" viewBox="0 0 14 14"><path d="M7 1l1.800 4 4.200.4-3.200 2.800 1 4.300L7 10.200 3.200 12.500l1-4.300L1 5.400 5.200 5z" fill="none" stroke="#5f6368" strokeWidth="1.300" /></Svg>
          </OmniStar>
        </Omnibox>
        <ExtIcons>
          <Svg width="16" height="18" viewBox="0 0 16 18"><path d="M1 1l4 2h6l4-2v11l-7 6-7-6z" fill="#c01818" /><path d="M4 6h8v5l-4 3-4-3z" fill="#fff" /></Svg>
          <UiSquare $s={16} $bg="#1e5fb0">Ui</UiSquare>
          <Svg width="16" height="16" viewBox="0 0 16 16"><path d="M1 5h4V3a2 2 0 014 0v2h4v4h2a2 2 0 010 4h-2v3H1v-3h2a2 2 0 000-4H1z" fill="#5f6368" /></Svg>
          <Avatar>A</Avatar>
          <Svg width="4" height="16" viewBox="0 0 4 16"><circle cx="2" cy="2" r="1.700" fill="#5f6368" /><circle cx="2" cy="8" r="1.700" fill="#5f6368" /><circle cx="2" cy="14" r="1.700" fill="#5f6368" /></Svg>
        </ExtIcons>
      </ChromeBar>

      <Bookmarks>
        <Bookmark $w={76}>
          <AppsGrid>
            {["#ea4335", "#ea4335", "#fbbc04", "#34a853", "#4285f4", "#ea4335", "#fbbc04", "#34a853", "#4285f4"].map((c, i) => (
              <AppsDot key={i} $c={c} />
            ))}
          </AppsGrid>
          Apps
        </Bookmark>
        {bookmarkRows.map((b) => (
          <Bookmark key={b.t} $w={b.w}>
            {b.kind === "folder" ? (
              <BmFolder />
            ) : (
              <DocMark $c={b.kind === "green" ? "#0f9d58" : "#4285f4"}>
                <Svg width="9" height="10" viewBox="0 0 9 10">
                  {b.kind === "green" ? (
                    <path d="M4.500 0v10M0 3h9" stroke="#fff" strokeWidth="1.600" />
                  ) : (
                    <path d="M1 2h7M1 5h7M1 8h7" stroke="#fff" strokeWidth="1.400" />
                  )}
                </Svg>
              </DocMark>
            )}
            {b.t}
          </Bookmark>
        ))}
        <OtherMarks>
          <BmFolder />
          Other bookmarks
        </OtherMarks>
      </Bookmarks>

      <Page>
        <CrmTabs>
          <CrmTab $w={117} $state="idle">ContactCenter</CrmTab>
          <CrmTab $w={61} $state="on">Tasks</CrmTab>
          <CrmTab $w={169} $state="idle">Authorization requests</CrmTab>
          <CrmTab $w={127} $state="off">Contact persons</CrmTab>
          <CrmTab $w={148} $state="idle">Find sales activities</CrmTab>
          <CrmTab $w={118} $state="off">Sales activities</CrmTab>
          <CrmTab $w={51} $state="off">Map</CrmTab>
          <LogOut>Log out Andrew.Devera ( CRM Administrator profile )</LogOut>
        </CrmTabs>
        <CrmBody>
          <CrmTitle>ERP - Return not created, error check</CrmTitle>
          <CrmTools>
            <Svg width="12" height="14" viewBox="0 0 12 14"><path d="M0 0h12v14H0z" fill="#1c4c8c" /><path d="M3 0h6v5H3z" fill="#fff" /><path d="M6 1h2v3H6z" fill="#1c4c8c" /></Svg>
            <CrmTool $l={26}>
              <Svg width="14" height="16" viewBox="0 0 14 16"><path d="M11 5a5.500 5.500 0 11-5-2" fill="none" stroke="#555" strokeWidth="2" /><path d="M6 0v6l4-3z" fill="#555" /></Svg>
            </CrmTool>
            <CrmTool $l={19}>Change Status <Chevron $c="#333" /></CrmTool>
            <CrmTool $l={23}>More <Chevron $c="#333" /></CrmTool>
          </CrmTools>
          <ErrorBox>
            <ErrHead>
              <Warn>!</Warn>
              Form has errors
            </ErrHead>
            <ErrItem>
              <Bullet />
              Python script error: expected string for parameter 'text' but got 'NoneType', Details:Traceback (most recent call last): File "", line 7, in TypeError: expected string for parameter 'text' but got 'NoneType'
            </ErrItem>
          </ErrorBox>

          <FormGrid>
            <FormCol>
              {leftFields.map((f, i) => (
                <FieldRow key={f.l} $h={f.h} $mt={i > 5 ? -1 : 0}>
                  <Label>{f.l}</Label>
                  <FieldBox $open={f.open}>{f.v}</FieldBox>
                  {f.find && <FieldAdorn><Magnifier /></FieldAdorn>}
                </FieldRow>
              ))}
            </FormCol>
            <FormCol>
              {rightFields.map((f) => (
                <FieldRow key={f.l}>
                  <Label>{f.l}</Label>
                  <FieldBox $open={f.open}>{f.v}</FieldBox>
                  {f.clear && <FieldAdorn><ClearX /></FieldAdorn>}
                </FieldRow>
              ))}
            </FormCol>
          </FormGrid>

          <RespCol>
            {respFields.map((f) => (
              <FieldRow key={f.l}>
                <Label>{f.l}</Label>
                <FieldBox>{f.v}</FieldBox>
              </FieldRow>
            ))}
            <FieldRow $h={24}>
              <Label>Decision:</Label>
              <DecisionBox $open>
                BreakLoop
                <Svg width="10" height="8" viewBox="0 0 10 8"><path d="M1 1l4 5 4-5" fill="none" stroke="#222" strokeWidth="1.800" /></Svg>
              </DecisionBox>
            </FieldRow>
          </RespCol>

          <Buttons>
            <Btn $focus>Finalize</Btn>
            <Btn>Back</Btn>
          </Buttons>

          <Footer>
            <ConvergeLogo>
              <Svg width="10" height="46" viewBox="0 0 10 46"><path d="M9 0C2 10 0 24 2 38l6 7C4 32 4 16 9 0z" fill="#1ea68c" /></Svg>
              <div>
                <ConvergeName>CONVERGE</ConvergeName>
                <ConvergeTag>PURE FIBER TECHNOLOGY</ConvergeTag>
              </div>
            </ConvergeLogo>
            <Version>Sunvizion - ContactCenter version 11.5 build 7423.26647</Version>
            <Copyright>Copyright © 1990 - 2020 Suntech S.A. All Rights Reserved.</Copyright>
            <SuntechWrap>
              <Svg width="60" height="8" viewBox="0 0 60 8"><path d="M2 7C18 0 42 0 58 7" fill="none" stroke="#e8731c" strokeWidth="2" /></Svg>
              <Suntech>suntech</Suntech>
            </SuntechWrap>
          </Footer>
        </CrmBody>
      </Page>
    </Browser>
  </Screen>
);

export default App;
